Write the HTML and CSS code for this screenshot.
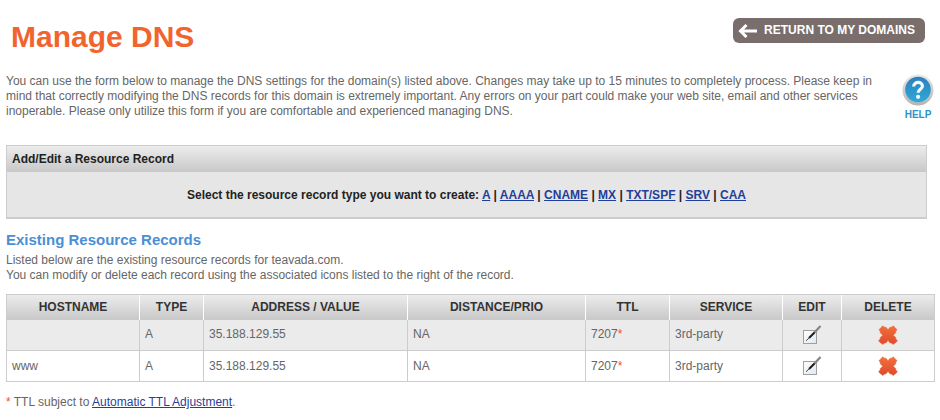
FILE: index.html
```html
<!DOCTYPE html>
<html lang="en">
<head>
<meta charset="utf-8">
<title>Manage DNS</title>
<link rel="stylesheet" href="styles.css">
</head>
<body>
<svg class="sprites" aria-hidden="true">
  <defs>
    <linearGradient id="blue" x1="0" y1="0" x2="0" y2="1"><stop offset="0" stop-color="#2e7fbb"/><stop offset="1" stop-color="#2eaad8"/></linearGradient>
    <linearGradient id="rim" x1="0" y1="0" x2="0" y2="1"><stop offset="0" stop-color="#e9e9e9"/><stop offset="1" stop-color="#b4b4b4"/></linearGradient>
    <linearGradient id="red" x1="0" y1="0" x2="0" y2="1"><stop offset="0" stop-color="#f2703a"/><stop offset="1" stop-color="#de4a2c"/></linearGradient>
    <linearGradient id="paper" x1="0" y1="0" x2="1" y2="1"><stop offset="0" stop-color="#ffffff"/><stop offset="1" stop-color="#dfe8f0"/></linearGradient>
    <symbol id="edit" viewBox="0 0 20 20">
      <rect x="1.500" y="5.500" width="13" height="13" fill="url(#paper)" stroke="#a0a0a0"/>
      <path d="M18.500 1 12 8" stroke="#858585" stroke-width="2.200" fill="none"/>
      <path d="M12.500 7.500 7 13" stroke="#1c1c1c" stroke-width="2" fill="none"/>
      <path d="M7.300 12.700 4 15.800" stroke="#444" stroke-width="1" fill="none"/>
    </symbol>
    <symbol id="delete" viewBox="0 0 20 20">
      <path d="M5 .8 6.300 2.300 8 2.200 10 4.800 12 2.200 13.700 2.300 15 .8 17 2.500 19 4.800 17.800 6.300 17.800 7.800 15.200 10.200 17.800 12.500 17.800 14 19.500 15.800 17.300 18 15 19.500 13.600 18 12.200 18 10 15.500 7.800 18 6.400 18 5 19.500 2.700 18 .5 15.800 2.200 14 2.200 12.500 4.800 10.200 2.200 7.800 2.200 6.300 1 4.800 3 2.500Z" fill="url(#red)" stroke="#e86a48" stroke-width=".6" stroke-linejoin="round"/>
    </symbol>
  </defs>
</svg>
<header class="top">
  <h1>Manage DNS</h1>
  <a class="return" href="#">
    <svg width="20" height="14" viewBox="0 0 20 14" aria-hidden="true"><path d="M8.500 1 2.500 7l6 6M2.500 7H19" fill="none" stroke="#fff" stroke-width="3"/></svg>
    <span>RETURN TO MY DOMAINS</span>
  </a>
</header>
<main>
  <div class="intro">
    <p>You can use the form below to manage the DNS settings for the domain(s) listed above. Changes may take up to 15 minutes to completely process. Please keep in<br>mind that correctly modifying the DNS records for this domain is extremely important. Any errors on your part could make your web site, email and other services<br>inoperable. Please only utilize this form if you are comfortable and experienced managing DNS.</p>
    <a class="help" href="#">
      <svg width="32" height="32" viewBox="0 0 32 32" aria-hidden="true"><circle cx="16" cy="16" r="15.500" fill="url(#rim)"/><circle cx="16" cy="15.500" r="12.800" fill="url(#blue)"/><path d="M11.700 12.500C11.900 6.900 20.600 7.200 20.400 12.300C20.300 15.300 16.100 15.200 16.100 18.800" fill="none" stroke="#f4fbff" stroke-width="3.200"/><circle cx="16.100" cy="22.800" r="2.100" fill="#f4fbff"/></svg>
      <span>HELP</span>
    </a>
  </div>
  <section class="panel">
    <h2>Add/Edit a Resource Record</h2>
    <p>Select the resource record type you want to create: <a href="#">A</a> | <a href="#">AAAA</a> | <a href="#">CNAME</a> | <a href="#">MX</a> | <a href="#">TXT/SPF</a> | <a href="#">SRV</a> | <a href="#">CAA</a></p>
  </section>
  <section class="records">
    <h2>Existing Resource Records</h2>
    <p>Listed below are the existing resource records for teavada.com.<br>You can modify or delete each record using the associated icons listed to the right of the record.</p>
    <table>
      <colgroup><col class="c-host"><col class="c-type"><col class="c-addr"><col class="c-dist"><col class="c-ttl"><col class="c-serv"><col class="c-edit"><col class="c-del"></colgroup>
      <thead>
        <tr><th>HOSTNAME</th><th>TYPE</th><th>ADDRESS / VALUE</th><th>DISTANCE/PRIO</th><th>TTL</th><th>SERVICE</th><th>EDIT</th><th>DELETE</th></tr>
      </thead>
      <tbody>
        <tr><td></td><td>A</td><td>35.188.129.55</td><td>NA</td><td>7207<span class="star">*</span></td><td>3rd-party</td>
          <td class="act"><button type="button" aria-label="Edit"><svg width="20" height="20"><use href="#edit"/></svg></button></td>
          <td class="act"><button type="button" aria-label="Delete"><svg width="20" height="20"><use href="#delete"/></svg></button></td></tr>
        <tr><td>www</td><td>A</td><td>35.188.129.55</td><td>NA</td><td>7207<span class="star">*</span></td><td>3rd-party</td>
          <td class="act"><button type="button" aria-label="Edit"><svg width="20" height="20"><use href="#edit"/></svg></button></td>
          <td class="act"><button type="button" aria-label="Delete"><svg width="20" height="20"><use href="#delete"/></svg></button></td></tr>
      </tbody>
    </table>
    <p class="note"><span class="star">*</span> TTL subject to <a href="#">Automatic TTL Adjustment</a>.</p>
  </section>
</main>
</body>
</html>
```
FILE: styles.css
```css
* { box-sizing: border-box; }
body {
  margin: 0;
  padding: 16px 5px 0 6px;
  background: #fff;
  color: #666;
  font: 12px/15px "Liberation Sans", Arial, sans-serif;
}
h1, h2, p { margin: 0; }
a { color: #1f3f9a; }
.sprites { position: absolute; width: 0; height: 0; }

.top {
  display: flex;
  justify-content: space-between;
  align-items: flex-start;
  padding: 2px 10px 0 5px;
}
h1 { color: #f1642e; font-size: 30px; line-height: 38px; }
.return {
  display: flex;
  align-items: center;
  gap: 6px;
  height: 25px;
  padding: 0 10px 0 5px;
  border-radius: 6px;
  background: #796e6c;
  color: #fff;
  font-size: 12px;
  font-weight: bold;
  text-decoration: none;
}

.intro {
  display: flex;
  justify-content: space-between;
  margin-top: 18px;
  white-space: nowrap;
}
.help {
  display: flex;
  flex-direction: column;
  align-items: center;
  gap: 2px;
  margin-right: 1px;
  color: #2a93cf;
  font-size: 10px;
  font-weight: bold;
  line-height: 14px;
  text-decoration: none;
}

.panel {
  margin: 23px 8px 0 0;
  border: 1px solid #ccc;
  border-bottom-width: 2px;
  background: #e6e6e6;
  color: #222;
  font-weight: bold;
}
.panel h2 {
  padding: 5px;
  font-size: 12px;
  line-height: 16px;
  background: linear-gradient(#ececec, #c8c8c8);
}
.panel p { padding: 16px 0 14px; text-align: center; }

.records h2 {
  margin: 12px 0 5px;
  color: #4a8fd5;
  font-size: 15px;
  line-height: 17px;
}
table {
  width: 100%;
  margin-top: 11px;
  border-collapse: collapse;
  table-layout: fixed;
}
.c-host { width: 133px; }
.c-type { width: 64px; }
.c-addr { width: 204px; }
.c-dist { width: 178px; }
.c-ttl { width: 84px; }
.c-serv { width: 113px; }
.c-edit { width: 59px; }
.c-del { width: 93px; }
thead tr { background: linear-gradient(#ececec, #c8c8c8); }
th {
  height: 25px;
  padding: 0;
  border: 1px solid #ccc;
  border-width: 1px 0 0 1px;
  border-left-color: #fff;
  color: #333;
}
th:first-child { border-left-color: #ccc; }
th:last-child { border-right: 1px solid #ccc; }
td { height: 31px; padding: 0 5px; border: 1px solid #ccc; }
tbody tr:first-child td { border-top: 0; background: #ebebeb; }
.act { padding: 0; text-align: center; }
button { display: block; margin: 0 auto; padding: 0; border: 0; background: none; }
button svg { display: block; }
.star { color: #f1502e; }
.note { margin-top: 13px; }
```
